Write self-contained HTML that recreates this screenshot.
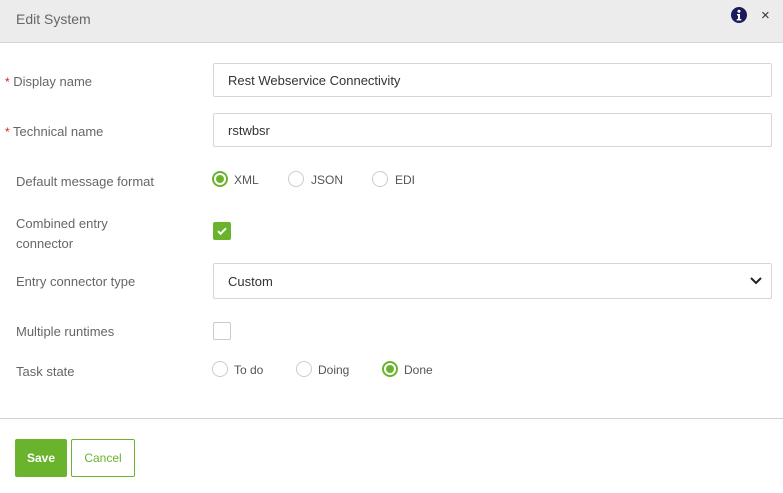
<!DOCTYPE html>
<html><head><style>
body{margin:0;width:783px;height:493px;background:#fff;font-family:"Liberation Sans",sans-serif;position:relative;overflow:hidden;color:#555}
.a{position:absolute}
.hdr{left:0;top:0;width:783px;height:42px;background:#ececec;border-bottom:1px solid #d6d6d6}
.lbl{font-size:13px;color:#666}
.inp{border:1px solid #d6d6d6;border-radius:2px;height:34px;box-sizing:border-box;font-size:13px;color:#333;padding:9px 14px}
.r{width:16px;height:16px;border:1px solid #ccc;border-radius:50%;box-sizing:border-box}
.r.on{border:2px solid #6ab42d}
.r.on:after{content:"";position:absolute;left:2px;top:2px;width:8px;height:8px;border-radius:50%;background:#6ab42d}
.rt{font-size:12px;color:#555}
.star{color:#d22;font-size:12px}
</style></head><body>
<div class="a hdr"></div>
<div class="a" style="left:16px;top:11px;font-size:14px;color:#666">Edit System</div>
<svg class="a" style="left:731px;top:7px" width="16" height="16" viewBox="0 0 16 16"><circle cx="8" cy="8" r="8" fill="#1a1a5e"/><circle cx="8" cy="4.3" r="1.5" fill="#fff"/><path d="M6 7h3v5h1.3v1.5H5.7V12H7V8.5H6z" fill="#fff"/></svg>
<div class="a" style="left:761px;top:7px;font-size:15px;color:#333">×</div>

<div class="a lbl" style="left:5px;top:74px"><span class="star">*</span> Display name</div>
<div class="a inp" style="left:213px;top:63px;width:559px">Rest Webservice Connectivity</div>
<div class="a lbl" style="left:5px;top:124px"><span class="star">*</span> Technical name</div>
<div class="a inp" style="left:213px;top:113px;width:559px">rstwbsr</div>

<div class="a lbl" style="left:16px;top:174px">Default message format</div>
<div class="a r on" style="left:212px;top:171px"></div><div class="a rt" style="left:234px;top:173px">XML</div>
<div class="a r" style="left:288px;top:171px"></div><div class="a rt" style="left:311px;top:173px">JSON</div>
<div class="a r" style="left:372px;top:171px"></div><div class="a rt" style="left:395px;top:173px">EDI</div>

<div class="a lbl" style="left:16px;top:214px;line-height:20px">Combined entry<br>connector</div>
<div class="a" style="left:213px;top:222px;width:18px;height:18px;background:#6ab42d;border-radius:2px"><svg width="18" height="18" viewBox="0 0 18 18"><path d="M5 9.2l2.6 2.5L13 6.3" stroke="#fff" stroke-width="2" fill="none"/></svg></div>

<div class="a lbl" style="left:16px;top:274px">Entry connector type</div>
<div class="a inp" style="left:213px;top:263px;width:559px;height:36px;padding-top:10px">Custom</div>
<svg class="a" style="left:749px;top:275px" width="14" height="12" viewBox="0 0 14 12"><path d="M2 3l5 5 5-5" stroke="#222" stroke-width="2" fill="none"/></svg>

<div class="a lbl" style="left:16px;top:324px">Multiple runtimes</div>
<div class="a" style="left:213px;top:322px;width:18px;height:18px;border:1px solid #ccc;box-sizing:border-box;border-radius:2px"></div>

<div class="a lbl" style="left:16px;top:364px">Task state</div>
<div class="a r" style="left:212px;top:361px"></div><div class="a rt" style="left:234px;top:363px">To do</div>
<div class="a r" style="left:296px;top:361px"></div><div class="a rt" style="left:318px;top:363px">Doing</div>
<div class="a r on" style="left:382px;top:361px"></div><div class="a rt" style="left:404px;top:363px">Done</div>

<div class="a" style="left:0;top:418px;width:783px;height:1px;background:#d0d0d0"></div>
<div class="a" style="left:15px;top:439px;width:52px;height:38px;background:#6ab42d;border-radius:2px;color:#fff;font-size:12px;font-weight:bold;text-align:center;line-height:38px">Save</div>
<div class="a" style="left:71px;top:439px;width:64px;height:38px;border:1px solid #6ab42d;box-sizing:border-box;border-radius:2px;color:#6ab42d;font-size:12px;text-align:center;line-height:36px">Cancel</div>
</body></html>
